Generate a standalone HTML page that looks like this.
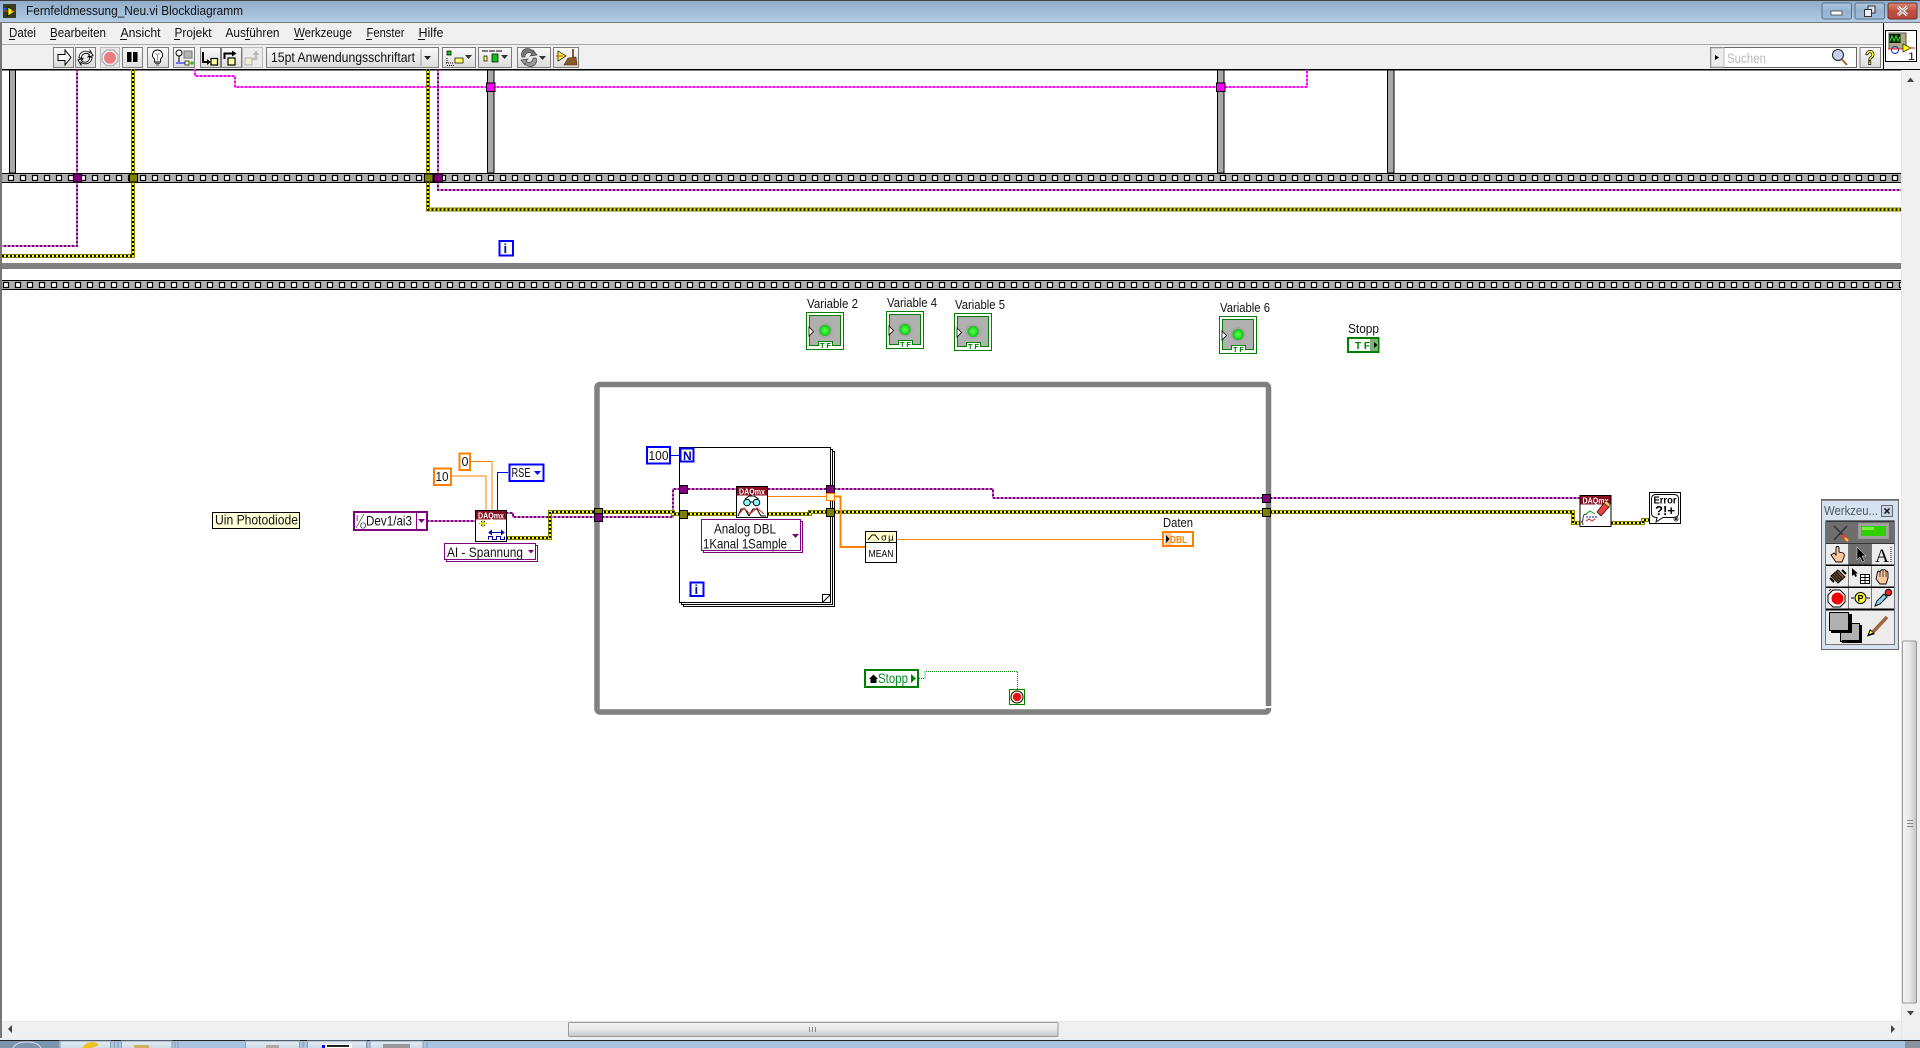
<!DOCTYPE html>
<html lang="de">
<head>
<meta charset="utf-8">
<title>Fernfeldmessung_Neu.vi Blockdiagramm</title>
<style>
html,body{margin:0;padding:0;background:#fff;width:1920px;height:1048px;overflow:hidden}
svg{display:block;font-family:"Liberation Sans",sans-serif}
text{fill:#111;font-size:13px}
.b{fill:url(#btn);stroke:#7c7c7c;stroke-width:1}
.n{fill:none}
.cr{shape-rendering:crispEdges}
</style>
</head>
<body>
<svg width="1920" height="1048" viewBox="0 0 1920 1048" xmlns="http://www.w3.org/2000/svg">
<defs>
<linearGradient id="tb" x1="0" y1="0" x2="0" y2="1"><stop offset="0" stop-color="#8eabc8"/><stop offset="1" stop-color="#b5cde6"/></linearGradient>
<linearGradient id="btn" x1="0" y1="0" x2="0" y2="1"><stop offset="0" stop-color="#fbfbfb"/><stop offset="1" stop-color="#dcdcdc"/></linearGradient>
<linearGradient id="wb" x1="0" y1="0" x2="0" y2="1"><stop offset="0" stop-color="#b0c8e0"/><stop offset=".5" stop-color="#96b2d0"/><stop offset="1" stop-color="#a2bedb"/></linearGradient>
<linearGradient id="wr" x1="0" y1="0" x2="0" y2="1"><stop offset="0" stop-color="#d98a7c"/><stop offset=".5" stop-color="#c0503f"/><stop offset="1" stop-color="#b8483a"/></linearGradient>
<linearGradient id="hth" x1="0" y1="0" x2="0" y2="1"><stop offset="0" stop-color="#f4f4f4"/><stop offset=".5" stop-color="#e8e8e8"/><stop offset="1" stop-color="#c4c4c4"/></linearGradient>
<linearGradient id="vth" x1="0" y1="0" x2="1" y2="0"><stop offset="0" stop-color="#f4f4f4"/><stop offset=".5" stop-color="#e8e8e8"/><stop offset="1" stop-color="#c4c4c4"/></linearGradient>
<linearGradient id="task" x1="0" y1="0" x2="0" y2="1"><stop offset="0" stop-color="#e6edf5"/><stop offset="1" stop-color="#c8d6e6"/></linearGradient>
<radialGradient id="led"><stop offset="0" stop-color="#60ff60"/><stop offset=".7" stop-color="#20e020"/><stop offset="1" stop-color="#14b814"/></radialGradient>
<pattern id="f1" patternUnits="userSpaceOnUse" x="5" y="173" width="12" height="10">
<rect width="12" height="10" fill="#b0b0b0"/><rect width="12" height="1" fill="#000"/><rect y="9" width="12" height="1" fill="#000"/>
<rect x="3.5" y="2.5" width="5" height="5" fill="#fff" stroke="#000" stroke-width="1.2"/></pattern>
<pattern id="f2" patternUnits="userSpaceOnUse" x="0" y="280" width="12" height="10">
<rect width="12" height="10" fill="#b0b0b0"/><rect width="12" height="1" fill="#000"/><rect y="9" width="12" height="1" fill="#000"/>
<rect x="3.5" y="2.5" width="5" height="5" fill="#fff" stroke="#000" stroke-width="1.2"/></pattern>
<path id="errs" d="M133 69V256H2M428 69V209.5H1901M506 538H550V512H673V514H680M688 514H737M767 514H810V512H826M834 512H1262M1270 512H1573V523H1580M1611 523H1643V520H1649" fill="none"/>
<path id="purp" d="M77 69V246H2M438 69V190H1901M427 521H475M506 513H513V517H673V489H680M688 489H826M834 489H993V498H1262M1270 498H1580" fill="none"/>
<path id="mag" d="M195 69V76H235V87H1307V69" fill="none"/>
<g id="var">
<rect x=".5" y=".5" width="37" height="37" fill="#fff" stroke="#008000"/>
<path d="M3.5 3.5H34.5V33.5H26.5V29.5H12.500V33.5H3.5Z" fill="#b0b0b0" stroke="#008000"/>
<circle cx="19" cy="18.5" r="7.500" fill="#a4a4a4"/>
<circle cx="19" cy="18.5" r="5.500" fill="url(#led)"/>
<path d="M3 15L7.500 19.500L3 24Z" fill="#fff" stroke="#000" stroke-width=".8"/>
<text x="14" y="36" style="font-size:7.500px;font-weight:bold;fill:#008000" textLength="11" lengthAdjust="spacing">TF</text>
</g>
<g id="daqh"><rect x=".5" y=".5" width="31" height="31" fill="#fff" stroke="#000"/><rect x="1" y="1" width="30" height="8.5" fill="#8a0f1e"/>
<text x="3" y="8.5" style="font-size:8px;font-weight:bold;fill:#fff" textLength="26" lengthAdjust="spacingAndGlyphs">DAQmx</text></g>
</defs>

<!-- window background -->
<rect width="1920" height="1048" fill="#fff"/>
<!-- title bar -->
<rect width="1920" height="23" fill="url(#tb)"/>
<rect width="1920" height="1" fill="#444"/>
<rect y="22" width="1920" height="1" fill="#777"/>
<g transform="translate(3,4)">
<rect width="13" height="14" fill="#3a3a20"/>
<path d="M5 3L12 7.500L5 12Z" fill="#ffff00" stroke="#000" stroke-width=".6"/>
<path d="M0 7H5M8 7H13" stroke="#e03030" stroke-width="1"/>
<rect x="0" y="4" width="4" height="2" fill="#2050e0"/>
</g>
<text x="26" y="15" textLength="217" lengthAdjust="spacingAndGlyphs" style="font-size:13px">Fernfeldmessung_Neu.vi Blockdiagramm</text>
<!-- window buttons -->
<rect x="1822" y="3" width="29.500" height="16" rx="2" fill="url(#wb)" stroke="#5a6f86"/>
<rect x="1831" y="11" width="11" height="4" fill="#fff" stroke="#444" stroke-width=".8"/>
<rect x="1855" y="3" width="29.500" height="16" rx="2" fill="url(#wb)" stroke="#5a6f86"/>
<rect x="1868" y="6" width="7" height="7" fill="#dde" stroke="#333"/><rect x="1864.500" y="9.500" width="7" height="7" fill="#eef" stroke="#333"/>
<rect x="1888" y="3" width="29" height="16" rx="2" fill="url(#wr)" stroke="#6a3028"/>
<path d="M1898 7L1907 15M1907 7L1898 15" stroke="#fff" stroke-width="3"/>
<path d="M1898 7L1907 15M1907 7L1898 15" stroke="#555" stroke-width=".6"/>

<!-- menu bar + toolbar -->
<rect x="0" y="23" width="1920" height="46" fill="#f0f0f0"/>
<rect x="2" y="44" width="1881" height="1" fill="#a8a8a8"/>
<g>
<text x="9" y="37" textLength="27" lengthAdjust="spacingAndGlyphs">Datei</text>
<text x="50" y="37" textLength="56" lengthAdjust="spacingAndGlyphs">Bearbeiten</text>
<text x="120.500" y="37" textLength="40" lengthAdjust="spacingAndGlyphs">Ansicht</text>
<text x="174.500" y="37" textLength="37" lengthAdjust="spacingAndGlyphs">Projekt</text>
<text x="225.500" y="37" textLength="54" lengthAdjust="spacingAndGlyphs">Ausführen</text>
<text x="294" y="37" textLength="58" lengthAdjust="spacingAndGlyphs">Werkzeuge</text>
<text x="366.500" y="37" textLength="38" lengthAdjust="spacingAndGlyphs">Fenster</text>
<text x="418.500" y="37" textLength="25" lengthAdjust="spacingAndGlyphs">Hilfe</text>
<path class="cr" d="M9 39.500H15M50 39.500H56M120 39.500H127M174 39.500H180M245 39.500H250M294 39.500H304M366 39.500H372M418 39.500H425" stroke="#111"/>
</g>

<!-- toolbar buttons -->
<g class="cr">
<rect class="b" x="53.500" y="47.500" width="20" height="20"/>
<rect class="b" x="75.500" y="47.500" width="20" height="20"/>
<rect x="100.500" y="47.500" width="19" height="20" fill="#e8e8e8" stroke="#bbb"/>
<rect class="b" x="122.500" y="47.500" width="20" height="20"/>
<rect class="b" x="147.500" y="47.500" width="21" height="20"/>
<rect class="b" x="173.500" y="47.500" width="21" height="20"/>
<rect class="b" x="200.500" y="47.500" width="20" height="20"/>
<rect class="b" x="221.500" y="47.500" width="20" height="20"/>
<rect x="242.500" y="47.500" width="20" height="20" fill="#ececec" stroke="#bbb"/>
<rect class="b" x="266.500" y="47.500" width="172" height="20"/>
<rect x="420.500" y="49" width="1" height="17" fill="#999"/>
<rect class="b" x="442.500" y="47.500" width="33" height="20"/>
<rect class="b" x="478.500" y="47.500" width="33" height="20"/>
<rect class="b" x="517.500" y="47.500" width="33" height="20"/>
<rect class="b" x="553.500" y="47.500" width="25" height="20"/>
</g>
<!-- run arrow -->
<path d="M58 54.500H65V50L71 57.500L65 65V60.500H58Z" fill="#fff" stroke="#000"/>
<!-- run continuously -->
<path d="M79 58A6.500 6.500 0 0 1 90 53V50.500L93 55.500L88 57L89.500 55A4.500 4.500 0 0 0 81.500 58Z" fill="#fff" stroke="#000" stroke-width=".9"/>
<path d="M92 57A6.500 6.500 0 0 1 81 62V65L78 60L83 58.500L81.500 60.500A4.500 4.500 0 0 0 89.500 57Z" fill="#fff" stroke="#000" stroke-width=".9"/>
<!-- abort -->
<path d="M106.500 50H113.500L118 54.500V61L113.500 65.500H106.500L102 61V54.500Z" fill="#f0f0f0" stroke="#a0a0a0"/>
<circle cx="110" cy="57.700" r="6" fill="#e88080"/>
<!-- pause -->
<path class="cr" d="M127 52H131.500V62H127ZM133 52H137.500V62H133Z" fill="#000"/>
<!-- bulb -->
<path d="M157.500 50A5 5 0 0 0 154.500 59V62H160.500V59A5 5 0 0 0 157.500 50Z" fill="#fff" stroke="#000" stroke-width=".9"/>
<path d="M155.500 53L157.500 55L159.500 53M157.500 55V61" class="n" stroke="#777" stroke-width=".7"/>
<path d="M155 63.500H160M156 65H159" stroke="#555"/>
<!-- retain -->
<circle cx="179" cy="53" r="3" fill="#fff" stroke="#000"/>
<path d="M179 56V62" stroke="#000"/>
<rect x="184" y="51" width="8" height="7" fill="#b4b4b4" stroke="#777"/>
<path d="M176 63H188" stroke="#0000ff"/>
<rect x="185" y="61" width="4" height="4" fill="#ffff99" stroke="#000" stroke-width=".7"/>
<path d="M190 63H194M192 61V65" stroke="#00a000"/>
<!-- step into -->
<path d="M203 52V62H208" class="n" stroke="#000" stroke-width="2"/>
<path d="M207 59L210.500 62L207 65Z" fill="#000"/>
<rect x="211" y="58.500" width="6.500" height="6.500" fill="#ffffa0" stroke="#000" stroke-width="1.200"/>
<!-- step over -->
<path d="M224.500 59V53.500H233" class="n" stroke="#000" stroke-width="2"/>
<path d="M232 50.500L236.500 53.500L232 56.500Z" fill="#000"/>
<rect x="228" y="58" width="7" height="7" fill="#ffffa0" stroke="#000" stroke-width="1.200"/>
<!-- step out -->
<rect x="245" y="58" width="7" height="7" fill="#f0f0d0" stroke="#aaa"/>
<path d="M252 59H256V54" class="n" stroke="#bbb" stroke-width="2.500"/>
<path d="M252.500 55L256 50.500L259.500 55Z" fill="#bbb"/>
<text x="271" y="62" textLength="144" lengthAdjust="spacingAndGlyphs" style="font-size:14px">15pt Anwendungsschriftart</text>
<path d="M424 56H431L427.500 60Z" fill="#222"/>
<!-- align -->
<rect x="447" y="51" width="4" height="4" fill="#10c010" stroke="#000" stroke-width=".7"/>
<rect x="455" y="58" width="8" height="5" fill="#ffff60" stroke="#000" stroke-width=".7"/>
<path d="M447 58V64M446 63H453M447 65.500H454" stroke="#000" stroke-dasharray="1 1"/>
<path d="M465 55H472L468.500 59Z" fill="#333"/>
<!-- distribute -->
<path d="M482 51H503" stroke="#000" stroke-dasharray="6 1"/>
<rect x="484" y="56" width="3" height="5" fill="#ffff60" stroke="#000" stroke-width=".7"/>
<rect x="492" y="54" width="6" height="8" fill="#10c010" stroke="#000" stroke-width=".7"/>
<path d="M501 55H508L504.500 59Z" fill="#333"/>
<!-- reorder -->
<path d="M522 57A6 6 0 0 1 533 52V50L537 55L530 56L532 54A4 4 0 0 0 525 57Z" fill="#777" stroke="#444" stroke-width=".7"/>
<path d="M536 58A6 6 0 0 1 525 63V65L521 60L528 59L526 61A4 4 0 0 0 533 58Z" fill="#999" stroke="#444" stroke-width=".7"/>
<path d="M539 56H546L542.500 60Z" fill="#333"/>
<!-- cleanup -->
<path d="M558 51L566 56L558 61Z" fill="#ffff30" stroke="#000" stroke-width=".7"/>
<path d="M556 56H563" stroke="#e03030"/>
<path d="M573 49V58" stroke="#7a4a20" stroke-width="1.800"/>
<path d="M568 58L576 57L577 65H564Z" fill="#8a5a28" stroke="#4a2a10" stroke-width=".6"/>

<!-- search, help, icon pane -->
<rect class="cr" x="1710.500" y="47.500" width="146" height="20" fill="#fff" stroke="#666"/>
<rect class="cr" x="1711" y="48" width="13" height="19" fill="#ececec" stroke="#bbb"/>
<path d="M1715 55L1719 57.500L1715 60Z" fill="#000"/>
<text x="1727" y="63" textLength="39" lengthAdjust="spacingAndGlyphs" style="fill:#bbb;font-size:13.500px">Suchen</text>
<circle cx="1838" cy="55" r="5.500" fill="#c8d0f0" stroke="#222"/>
<path d="M1842 59.500L1847 65" stroke="#a06830" stroke-width="2"/>
<rect class="b cr" x="1860" y="47.500" width="20.500" height="20"/>
<text x="1865" y="64.500" textLength="10" lengthAdjust="spacingAndGlyphs" style="font-size:20px;font-weight:bold;fill:#ffff30;stroke:#000;stroke-width:.8">?</text>
<rect class="cr" x="1883" y="23" width="1" height="46" fill="#000"/>
<rect class="cr" x="1885.500" y="30.500" width="31" height="31" fill="#fff" stroke="#000"/>
<rect class="cr" x="1889" y="33" width="17" height="16" fill="#b0a880" stroke="#555"/>
<rect class="cr" x="1889.500" y="34" width="11" height="9" fill="#062006"/>
<path d="M1890 41L1892 36L1894 41L1896 36L1898 41L1900 37" class="n" stroke="#30e030"/>
<circle cx="1895" cy="50" r="3.500" class="n" stroke="#1030c0"/>
<path d="M1888 49H1903" stroke="#e02020"/>
<path d="M1903 44L1911 48L1903 52Z" fill="#ffff00" stroke="#000" stroke-width=".6"/>
<path d="M1911 48H1915" stroke="#d02020"/>
<text x="1908" y="60" textLength="7" lengthAdjust="spacingAndGlyphs" style="font-size:11px">1</text>

<rect class="cr" x="0" y="69" width="1920" height="1.300" fill="#000"/>

<!-- top diagram structure -->
<g class="cr">
<rect x="9.500" y="70" width="6" height="103" fill="#a8a8a8" stroke="#000" stroke-width=".8"/>
<rect x="487.500" y="70" width="6.500" height="103" fill="#a8a8a8" stroke="#000"/>
<rect x="1217.500" y="70" width="6.500" height="103" fill="#a8a8a8" stroke="#000"/>
<rect x="1387.500" y="70" width="6.500" height="103" fill="#a8a8a8" stroke="#000"/>
<rect x="2" y="173" width="1899" height="10" fill="url(#f1)"/>
<rect x="2" y="263" width="1899" height="6" fill="#808080"/>
<rect x="2" y="280" width="1899" height="10" fill="url(#f2)"/>
</g>
<!-- bottom structures -->
<rect x="597" y="384.500" width="671.500" height="327.500" rx="3" fill="none" stroke="#808080" stroke-width="5.500"/>
<rect class="cr" x="1265" y="706" width="7" height="2" fill="#fff"/>
<g class="cr">
<rect x="683.500" y="451.500" width="151" height="155" fill="#fff" stroke="#000"/>
<rect x="681.500" y="449.500" width="151" height="155" fill="#fff" stroke="#000"/>
<rect x="679.500" y="447.500" width="151" height="155" fill="#fff" stroke="#000"/>
</g>
<path d="M822.500 602.500L830.500 594.500V602.500Z" fill="#fff" stroke="#000"/>
<path class="cr" d="M822.500 602V594.500H830" fill="none" stroke="#000"/>

<!-- wires -->
<g class="cr">
<use href="#mag" stroke="#ff00ff" stroke-width="1"/>
<use href="#mag" stroke="#ff00ff" stroke-width="2" stroke-dasharray="2 2"/>
<use href="#purp" stroke="#800080" stroke-width="1"/>
<use href="#purp" stroke="#800080" stroke-width="2" stroke-dasharray="2 2"/>
<use href="#errs" stroke="#808000" stroke-width="4"/>
<use href="#errs" stroke="#ffff00" stroke-width="2"/>
<use href="#errs" stroke="#000" stroke-width="2" stroke-dasharray="2 2"/>
<path d="M452 476H486V510M471 461.500H492V510" fill="none" stroke="#ff8000"/>
<path d="M508 472.500H497.500V510M671 455.500H680" fill="none" stroke="#0000ff"/>
<path d="M768 496.500H826M897 539.500H1162" fill="none" stroke="#ff8000"/>
<path d="M834 496.500H840.500V547H866" fill="none" stroke="#ff8000" stroke-width="2"/>
<path d="M919 678.500H925V671.500H1017.500V689" fill="none" stroke="#008000" stroke-dasharray="1 1"/>
</g>

<!-- tunnels/nodes top -->
<g class="cr" stroke="#000">
<rect x="73.500" y="174" width="8" height="8" fill="#800080"/>
<rect x="129.500" y="174" width="8" height="8" fill="#808000"/>
<rect x="424.500" y="174" width="8.500" height="8" fill="#808000"/>
<rect x="434" y="174" width="8.500" height="8" fill="#800080"/>
<rect x="486.500" y="83" width="8.500" height="8.500" fill="#ff00ff"/>
<rect x="1216.500" y="83" width="8.500" height="8.500" fill="#ff00ff"/>
<!-- loop tunnels -->
<rect x="594.500" y="508.500" width="8" height="5" fill="#808000"/>
<rect x="594.500" y="513.500" width="8" height="8" fill="#800080"/>
<rect x="1262.500" y="494.500" width="8" height="8" fill="#800080"/>
<rect x="1262.500" y="508.500" width="8" height="8" fill="#808000"/>
<rect x="679.500" y="485.500" width="8" height="8" fill="#800080"/>
<rect x="679.500" y="510.500" width="8" height="8" fill="#808000"/>
<rect x="826.500" y="485.500" width="8" height="8" fill="#800080"/>
<rect x="826.500" y="508.500" width="8" height="8" fill="#808000"/>
<rect x="826.500" y="493.500" width="8" height="7" fill="#ffffcc" stroke="#ff8000"/>
</g>

<!-- loop iteration terminals -->
<g class="cr"><rect x="499.500" y="241" width="13.500" height="14.500" fill="#fffff0" stroke="#0000ff" stroke-width="2"/></g>
<text x="503.500" y="253" style="font-size:13px;font-weight:bold;fill:#0000c0">i</text>
<g class="cr"><rect x="690.500" y="582.500" width="13" height="13.500" fill="#fffff0" stroke="#0000ff" stroke-width="2"/></g>
<text x="694.500" y="594" style="font-size:13px;font-weight:bold;fill:#0000c0">i</text>
<g class="cr"><rect x="680.500" y="448.500" width="13" height="13" fill="#ffffcc" stroke="#0000ff" stroke-width="2"/></g>
<text x="683" y="460" style="font-size:12px;font-weight:bold;fill:#0000c0">N</text>
<g class="cr"><rect x="647" y="447" width="23" height="16.500" fill="#fff" stroke="#0000ff" stroke-width="2"/></g>
<text x="648.500" y="460" textLength="20" lengthAdjust="spacingAndGlyphs">100</text>

<!-- variables -->
<text x="807" y="308" textLength="51" lengthAdjust="spacingAndGlyphs">Variable 2</text>
<use href="#var" transform="translate(806,312)"/>
<text x="887" y="307" textLength="50" lengthAdjust="spacingAndGlyphs">Variable 4</text>
<use href="#var" transform="translate(886,311)"/>
<text x="955" y="309" textLength="50" lengthAdjust="spacingAndGlyphs">Variable 5</text>
<use href="#var" transform="translate(954,313)"/>
<text x="1220" y="312" textLength="50" lengthAdjust="spacingAndGlyphs">Variable 6</text>
<use href="#var" transform="translate(1219,316)"/>
<text x="1348" y="333" textLength="31" lengthAdjust="spacingAndGlyphs">Stopp</text>
<g class="cr"><rect x="1348" y="338" width="30.500" height="14" fill="#fff" stroke="#008000" stroke-width="2"/>
<rect x="1370" y="339" width="8" height="12" fill="#80b080"/></g>
<text x="1355" y="349" textLength="15" lengthAdjust="spacing" style="font-size:10px;font-weight:bold;fill:#008000">TF</text>
<path d="M1374 342L1377.500 345L1374 348Z" fill="#000"/>

<!-- left controls -->
<rect class="cr" x="212.500" y="512.500" width="87" height="16" fill="#ffffd8" stroke="#000"/>
<text x="215" y="524.500" textLength="83" lengthAdjust="spacingAndGlyphs" style="font-size:13.500px">Uin Photodiode</text>
<rect class="cr" x="354" y="512" width="73" height="18" fill="#fff" stroke="#800080" stroke-width="2"/>
<rect class="cr" x="416" y="512" width="1" height="18" fill="#800080"/>
<text x="356" y="521" style="font-size:8px;fill:#222">I</text>
<path d="M356 528L364 514" stroke="#333" stroke-width=".7"/>
<text x="360" y="528.500" style="font-size:8px;fill:#222">O</text>
<text x="366" y="525.500" textLength="46" lengthAdjust="spacingAndGlyphs" style="font-size:13.500px">Dev1/ai3</text>
<path d="M418 519H425L421.500 523Z" fill="#800080"/>
<g class="cr"><rect x="434" y="468.500" width="17" height="16.500" fill="#fff" stroke="#ff8000" stroke-width="2"/>
<rect x="459.500" y="453.500" width="10.500" height="16.500" fill="#fff" stroke="#ff8000" stroke-width="2"/>
<rect x="509.500" y="464.500" width="34" height="16.500" fill="#fff" stroke="#0000ff" stroke-width="2"/></g>
<text x="435.500" y="481" textLength="13" lengthAdjust="spacingAndGlyphs">10</text>
<text x="461.500" y="466" textLength="7" lengthAdjust="spacingAndGlyphs">0</text>
<text x="511.500" y="477" textLength="19" lengthAdjust="spacingAndGlyphs">RSE</text>
<path d="M534 471H541L537.500 475Z" fill="#0000ff"/>
<!-- DAQmx create -->
<use href="#daqh" transform="translate(475,510)"/>
<path d="M483 520V527M479.500 523.500H486.500M481 521L485 526M485 521L481 526" stroke="#111" stroke-width=".9"/>
<path d="M480 523.500H486M483 520.500V526.500" stroke="#ffff00" stroke-width="1.200"/>
<path d="M489 532.500H504M489 532.500L491.500 530.500V534.500ZM504 532.500L501.500 530.500V534.500Z" stroke="#0000a0" fill="#0000a0"/>
<path class="cr" d="M488.500 539.500V536.500H492.500V539.500H496.500V536.500H500.500V539.500H504.500V536.500" fill="none" stroke="#0000a0"/>
<g class="cr"><rect x="446.500" y="545.500" width="91" height="16" fill="#fff" stroke="#800080"/>
<rect x="444.500" y="543.500" width="91" height="16" fill="#fff" stroke="#800080"/></g>
<text x="447" y="557" textLength="76" lengthAdjust="spacingAndGlyphs" style="font-size:14px">AI - Spannung</text>
<path d="M528 550H534L531 553.500Z" fill="#800080"/>
<!-- DAQmx read -->
<use href="#daqh" transform="translate(736,486)"/>
<circle cx="747" cy="502.500" r="3.300" fill="#8ff" stroke="#000"/>
<circle cx="756.500" cy="502.500" r="3.300" fill="#8ff" stroke="#000"/>
<path d="M750 502H753.500M745 499L749 496H754L758.500 499" fill="none" stroke="#000"/>
<path d="M738 516L741 509H745L749 516M749 516L753 509H757L761 516H766" fill="none" stroke="#000"/>
<path d="M739 514L744 508L750 514L757 508L764 514" fill="none" stroke="#e02020"/>
<g class="cr"><rect x="703.500" y="521.500" width="99" height="31" fill="#fff" stroke="#800080"/>
<rect x="701.500" y="519.500" width="99" height="31" fill="#fff" stroke="#800080"/></g>
<text x="714" y="533.500" textLength="62" lengthAdjust="spacingAndGlyphs" style="font-size:14px">Analog DBL</text>
<text x="703" y="548.500" textLength="84" lengthAdjust="spacingAndGlyphs" style="font-size:14px">1Kanal 1Sample</text>
<path d="M792 534H799L795.500 538Z" fill="#800080"/>
<!-- MEAN -->
<rect class="cr" x="865.500" y="531.500" width="31" height="31" fill="#fff" stroke="#000"/>
<rect class="cr" x="866" y="532" width="30" height="11" fill="#ffffcc"/>
<rect class="cr" x="866" y="542" width="30" height="1" fill="#000"/>
<path d="M868 540L872 535H875L879 540" fill="none" stroke="#000"/>
<text x="881" y="540.500" style="font-size:9px;fill:#000;font-family:'DejaVu Sans',sans-serif">σ</text>
<text x="888" y="540.500" style="font-size:9px;fill:#000;font-family:'DejaVu Sans',sans-serif">μ</text>
<text x="868.500" y="557" textLength="25" lengthAdjust="spacingAndGlyphs" style="font-size:10.500px;fill:#000">MEAN</text>
<!-- Daten -->
<text x="1163" y="527" textLength="30" lengthAdjust="spacingAndGlyphs">Daten</text>
<rect class="cr" x="1163" y="532" width="30" height="14" fill="#fff" stroke="#ff8000" stroke-width="1.800"/>
<rect class="cr" x="1165" y="533" width="6.500" height="12" fill="#ffc890"/>
<path d="M1166 535L1169.500 539L1166 543Z" fill="#000"/>
<text x="1170" y="543" textLength="17" lengthAdjust="spacingAndGlyphs" style="font-size:10px;font-weight:bold;fill:#ff8000">DBL</text>
<!-- Stopp local -->
<rect class="cr" x="865" y="670" width="53" height="17" fill="#fff" stroke="#008000" stroke-width="2"/>
<path d="M869 679L873.500 674.500L878 679H876.500V683H870.500V679Z" fill="#000"/>
<text x="878" y="683" textLength="30" lengthAdjust="spacingAndGlyphs" style="font-size:14px;fill:#0a8a2a">Stopp</text>
<path d="M911 674L916 678.500L911 683Z" fill="#008000"/>
<!-- stop terminal -->
<rect class="cr" x="1009.500" y="689.500" width="15" height="15" fill="#ffffcc" stroke="#008000"/>
<circle cx="1017" cy="697" r="6" fill="#fff" stroke="#000"/>
<circle cx="1017" cy="697" r="4.200" fill="#f01010"/>
<!-- DAQmx clear -->
<use href="#daqh" transform="translate(1579.500,495)"/>
<path d="M1587 514Q1583 514 1583 518V519Q1583 522 1581 522Q1583 522 1583 525" fill="none" stroke="#000" stroke-width=".8"/>
<path d="M1586 514L1590 511L1595 514" fill="none" stroke="#10a010"/>
<path d="M1586 517H1598" stroke="#1010c0" stroke-dasharray="2 1"/>
<path d="M1586 521L1589 519L1592 521L1595 519" fill="none" stroke="#e02020"/>
<path d="M1597 512L1604 503L1609 507L1601 516Z" fill="#f04040" stroke="#000" stroke-width=".7"/>
<path d="M1604 503L1606 501L1610 504L1609 507Z" fill="#f0e060" stroke="#000" stroke-width=".5"/>
<!-- Error -->
<rect class="cr" x="1649.500" y="492.500" width="31" height="31" fill="#fff" stroke="#000"/>
<path d="M1651.500 499Q1651.500 494.500 1656 494.500H1674Q1678.500 494.500 1678.500 499V513Q1678.500 517.500 1674 517.500H1663L1656 522L1657 517.500Q1651.500 517.500 1651.500 513Z" fill="#fff" stroke="#000" stroke-width=".9"/>
<text x="1653.500" y="503.500" textLength="23" lengthAdjust="spacingAndGlyphs" style="font-size:10px;font-weight:bold;fill:#000">Error</text>
<text x="1655" y="515" textLength="20" lengthAdjust="spacingAndGlyphs" style="font-size:13px;font-weight:bold;fill:#000">?!+</text>
<path d="M1673 519H1679M1676 516V522M1674 517L1678 521M1678 517L1674 521" stroke="#222" stroke-width=".7"/>

<!-- tools palette -->
<rect class="cr" x="1821.500" y="499.500" width="77" height="150" fill="#d6e2f0" stroke="#666"/>
<rect class="cr" x="1822" y="500" width="76" height="1" fill="#888"/>
<text x="1824" y="515" textLength="54" lengthAdjust="spacingAndGlyphs" style="font-size:13px;fill:#4a5a68">Werkzeu...</text>
<rect class="cr" x="1881.500" y="505.500" width="11" height="11" fill="#c8d6e6" stroke="#667"/>
<path d="M1884.500 508.500L1889.500 513.500M1889.500 508.500L1884.500 513.500" stroke="#222" stroke-width="1.600"/>
<rect class="cr" x="1825.500" y="520.500" width="69" height="124.500" fill="#000"/>
<rect class="cr" x="1826" y="521.500" width="68" height="22" fill="#6e6e6e"/>
<path d="M1834 526L1848 540M1847 526L1834 540" stroke="#333" stroke-width="1.500"/>
<path d="M1842 535L1848 541" stroke="#f04020" stroke-width="3"/>
<path d="M1845 538L1848 541" stroke="#ffd020" stroke-width="2"/>
<rect class="cr" x="1858.500" y="523.500" width="30" height="15" fill="#a0a0a0" stroke="#999"/>
<rect class="cr" x="1861" y="526" width="25" height="10" fill="#30d000"/>
<rect class="cr" x="1862" y="527" width="12" height="3" fill="#80f040"/>
<g class="cr" fill="#ececec">
<rect x="1826" y="544" width="22.300" height="20.700"/><rect x="1849" y="544" width="22" height="20.700" fill="#6e6e6e"/><rect x="1871.700" y="544" width="22.300" height="20.700"/>
<rect x="1826" y="566" width="22.300" height="20.700"/><rect x="1849" y="566" width="22" height="20.700"/><rect x="1871.700" y="566" width="22.300" height="20.700"/>
<rect x="1826" y="588" width="22.300" height="20.700"/><rect x="1849" y="588" width="22" height="20.700"/><rect x="1871.700" y="588" width="22.300" height="20.700"/>
<rect x="1826" y="610.700" width="68" height="34"/>
</g>
<!-- hand -->
<path d="M1831 555L1834 553L1836 555V548Q1836 546.500 1837.500 546.500Q1839 546.500 1839 548V552L1843 553Q1845 554 1844 557L1842 562H1836Z" fill="#fcc89c" stroke="#000" stroke-width=".9"/>
<!-- arrow -->
<path d="M1857 547V560L1860 557L1862.500 562L1864.500 561L1862 556H1866Z" fill="#000" stroke="#fff" stroke-width=".5"/>
<!-- A -->
<text x="1875" y="562" textLength="14" lengthAdjust="spacingAndGlyphs" style="font-family:'Liberation Serif',serif;font-size:19px;fill:#000">A</text>
<path d="M1891 547V562" stroke="#000" stroke-dasharray="1 1"/>
<!-- spool -->
<path d="M1831 576L1838 570L1845 577L1838 583Z" fill="#8a5a28" stroke="#000"/>
<path d="M1834 573L1841 580M1836 572L1843 579M1833 575L1840 582" stroke="#000"/>
<path d="M1830 578L1834 582M1842 570L1846 574" stroke="#000" stroke-width="2"/>
<!-- arrow list -->
<path d="M1852 568V576L1854 574.500L1855.500 577L1857 576L1855.500 573.500H1858Z" fill="#000"/>
<rect class="cr" x="1860.500" y="574.500" width="9" height="9" fill="#fff" stroke="#000"/>
<path class="cr" d="M1860 577.500H1870M1860 580.500H1870M1865 575V584" stroke="#000"/>
<!-- grab hand -->
<path d="M1877 575Q1877 571 1879 571L1880 572Q1881 569 1883 570Q1885 569 1886 571Q1888 571 1888 573V578L1886 584H1880L1876 579Z" fill="#fcc89c" stroke="#000" stroke-width=".9"/>
<path d="M1880 572V577M1883 570V577M1886 571V577" stroke="#000" stroke-width=".7"/>
<!-- breakpoint -->
<path d="M1833 590H1840L1845 595V602L1840 607H1833L1828 602V595Z" fill="#fff" stroke="#000"/>
<circle cx="1837.500" cy="598.500" r="6" fill="#f00000"/>
<path d="M1829 591L1831 589" stroke="#000"/>
<!-- probe -->
<path d="M1851 598H1854M1867 598H1870" stroke="#000"/>
<circle cx="1860.500" cy="598" r="5.500" fill="#ffff30" stroke="#000"/>
<text x="1857.500" y="601.500" style="font-size:9px;font-weight:bold;fill:#000">P</text>
<!-- dropper -->
<path d="M1875 606L1877 601L1884 594L1887 597L1880 604Z" fill="#80d8f0" stroke="#000"/>
<circle cx="1888.500" cy="592.500" r="3.200" fill="#f02020" stroke="#000"/>
<!-- colour squares -->
<rect class="cr" x="1840.500" y="623.500" width="19" height="18" fill="#b0b0b0" stroke="#000"/>
<rect class="cr" x="1842" y="640" width="19" height="3" fill="#000"/>
<rect class="cr" x="1859" y="625" width="3" height="18" fill="#000"/>
<rect class="cr" x="1829.500" y="612.500" width="19" height="18" fill="#b0b0b0" stroke="#000"/>
<rect class="cr" x="1831" y="630" width="19" height="3" fill="#000"/>
<rect class="cr" x="1849" y="614" width="3" height="19" fill="#000"/>
<!-- brush -->
<path d="M1873 632L1887 617" stroke="#a06840" stroke-width="3.500"/>
<path d="M1867 636.500L1870 629L1875 634Z" fill="#000"/>
<path d="M1869 634L1870.500 630.500L1873 633Z" fill="#ffff20"/>

<!-- scrollbars -->
<rect class="cr" x="1901" y="70" width="19" height="968" fill="#f0f0f0"/>
<rect class="cr" x="1901" y="70" width="1" height="968" fill="#e6e6e6"/>
<path d="M1907 82H1914L1910.500 77.500Z" fill="#444"/>
<path d="M1907 1011H1914L1910.500 1015.500Z" fill="#444"/>
<rect x="1902.500" y="641" width="14" height="362" rx="1" fill="url(#vth)" stroke="#9a9a9a"/>
<path class="cr" d="M1907 820.500H1913M1907 823.500H1913M1907 826.500H1913" stroke="#888"/>
<rect class="cr" x="2" y="1022" width="1899" height="16" fill="#f0f0f0"/>
<rect class="cr" x="2" y="1021" width="1899" height="1" fill="#e6e6e6"/>
<path d="M12 1025V1033L8 1029Z" fill="#444"/>
<path d="M1891 1025V1033L1895 1029Z" fill="#444"/>
<rect x="568.500" y="1022.500" width="489.500" height="14" rx="1" fill="url(#hth)" stroke="#9a9a9a"/>
<path class="cr" d="M809.500 1027V1032M812.500 1027V1032M815.500 1027V1032" stroke="#888"/>
<rect class="cr" x="0" y="23" width="2" height="1017" fill="#777"/>

<!-- taskbar -->
<rect class="cr" x="0" y="1038" width="1920" height="2" fill="#e8eef5"/>
<rect class="cr" x="0" y="1040" width="1920" height="1" fill="#222"/>
<rect class="cr" x="0" y="1041" width="1920" height="7" fill="#a9c2de"/>
<rect class="cr" x="0" y="1041" width="59" height="7" fill="#7d94ae"/>
<path d="M13 1048Q16 1042 27 1042Q38 1042 41 1048" fill="#7d94ae" stroke="#dde" stroke-width="1"/>
<g class="cr" fill="url(#task)" stroke="#8a9db2">
<rect x="60" y="1041" width="50.500" height="9"/>
<rect x="121.500" y="1041" width="50.500" height="9"/>
<rect x="245.500" y="1041" width="54" height="9"/>
<rect x="307.500" y="1041" width="59" height="9"/>
<rect x="370" y="1041" width="53" height="9"/>
</g>
<g class="cr" stroke="#8a9db2" fill="none"><path d="M114.500 1041V1048M118 1041V1048M175 1041V1048M178 1041V1048M303 1041V1048M367 1041V1048M427 1041V1048"/></g>
<path d="M82 1048Q86 1042 92 1042Q97 1042 99 1045L92 1048Z" fill="#f0c020"/>
<rect class="cr" x="134" y="1045" width="15" height="3" fill="#d0b060"/>
<rect class="cr" x="266" y="1045" width="13" height="3" fill="#aaa"/>
<rect class="cr" x="322" y="1044" width="30" height="4" fill="#fff"/>
<rect class="cr" x="322" y="1045" width="3" height="3" fill="#00f"/>
<rect class="cr" x="327" y="1045" width="22" height="2" fill="#222"/>
<rect class="cr" x="383" y="1044" width="27" height="4" fill="#999"/>
<rect class="cr" x="1905" y="1041" width="15" height="7" fill="#88939f"/>
</svg>
</body>
</html>
